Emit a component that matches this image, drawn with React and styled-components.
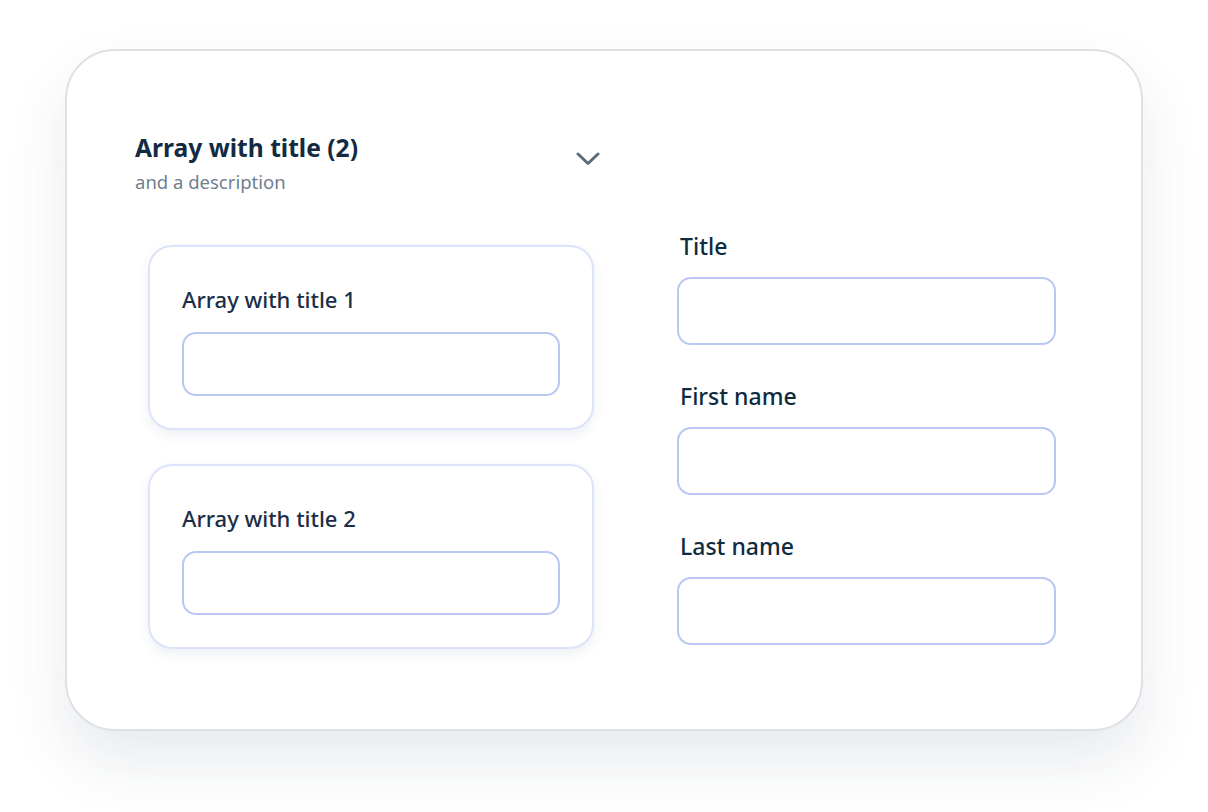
import styled, { createGlobalStyle } from "styled-components";

// ---------------- Global ----------------

const GlobalStyle = createGlobalStyle`
  html, body {
    margin: 0;
    padding: 0;
    background: #ffffff;
  }

  body {
    font-family: "Noto Sans", "Liberation Sans", sans-serif;
    -webkit-font-smoothing: antialiased;
  }
`;

// ---------------- Styled Components ----------------

const Page = styled.div`
  width: 1208px;
  height: 812px;
  padding: 49px 0 0 65px;
  box-sizing: border-box;
`;

const Panel = styled.section`
  width: 1078px;
  height: 682px;
  box-sizing: border-box;
  background: #ffffff;
  border: 2px solid #dde1e6;
  border-radius: 50px;
  box-shadow: 0 30px 60px rgba(30, 50, 80, 0.1);
  padding: 81px 85px 0 68px;
  display: grid;
  grid-template-columns: 472px 379px;
  grid-template-rows: auto auto;
  align-content: start;
  column-gap: 70px;
  row-gap: 37px;
`;

const Header = styled.header`
  grid-column: 1;
  grid-row: 1;
  display: flex;
  align-items: flex-start;
  justify-content: space-between;
  padding-right: 7px;
`;

const HeaderText = styled.div`
  display: flex;
  flex-direction: column;
`;

const Title = styled.h2`
  margin: 0;
  font-size: 24.6px;
  line-height: 32px;
  font-weight: 700;
  color: #122b43;
`;

const Description = styled.p`
  margin: 6px 0 0;
  font-size: 18.5px;
  line-height: 24px;
  font-weight: 400;
  color: #6f7f8e;
`;

const Toggle = styled.button`
  margin-top: 19px;
  padding: 0;
  border: none;
  background: none;
  color: #5a6c7d;
  width: 24px;
  height: 16px;
  display: flex;
  align-items: center;
  justify-content: center;
  cursor: pointer;
`;

const ArrayList = styled.div`
  grid-column: 1;
  grid-row: 2;
  display: flex;
  flex-direction: column;
  gap: 34px;
  padding: 14px 13px 0 13px;
`;

const ItemCard = styled.div`
  background: #ffffff;
  border: 2px solid #dde3fa;
  border-radius: 24px;
  box-shadow: 0 5px 12px rgba(40, 60, 120, 0.08);
  padding: 37px 32px 32px 32px;
  display: flex;
  flex-direction: column;
  gap: 18px;
`;

const Fields = styled.div`
  grid-column: 2;
  grid-row: 2;
  display: flex;
  flex-direction: column;
  gap: 36px;
`;

const Field = styled.label`
  display: flex;
  flex-direction: column;
  gap: 16px;
`;

const Label = styled.span`
  font-size: ${props => (props.$nested ? "22px" : "23px")};
  line-height: 30px;
  font-weight: 500;
  padding-left: ${props => (props.$nested ? "0" : "3px")};
  color: ${props => (props.$nested ? "#1a2f46" : "#0f2b40")};
`;

const Input = styled.input`
  display: block;
  box-sizing: border-box;
  width: 100%;
  height: ${props => (props.$short ? "64px" : "68px")};
  margin: 0;
  border: 2px solid #b9c7f3;
  border-radius: 14px;
  background: #ffffff;
  font-family: inherit;
  font-size: 18px;
  padding: 0 16px;
  outline: none;
`;

// ---------------- Icons ----------------

const ChevronDown = () => (
  <svg width="24" height="14" viewBox="0 0 24 14" fill="none">
    <path
      d="M2 2 L12 11.5 L22 2"
      stroke="currentColor"
      strokeWidth="3"
      strokeLinecap="round"
      strokeLinejoin="round"
    />
  </svg>
);

// ---------------- Main Component ----------------

const items = ["Array with title 1", "Array with title 2"];
const fields = ["Title", "First name", "Last name"];

export default function App() {
  return (
    <>
      <GlobalStyle />
      <Page>
        <Panel>
          <Header>
            <HeaderText>
              <Title>Array with title (2)</Title>
              <Description>and a description</Description>
            </HeaderText>
            <Toggle aria-label="Collapse">
              <ChevronDown />
            </Toggle>
          </Header>

          <ArrayList>
            {items.map(item => (
              <ItemCard key={item}>
                <Label $nested>{item}</Label>
                <Input $short />
              </ItemCard>
            ))}
          </ArrayList>

          <Fields>
            {fields.map(name => (
              <Field key={name}>
                <Label>{name}</Label>
                <Input />
              </Field>
            ))}
          </Fields>
        </Panel>
      </Page>
    </>
  );
}
